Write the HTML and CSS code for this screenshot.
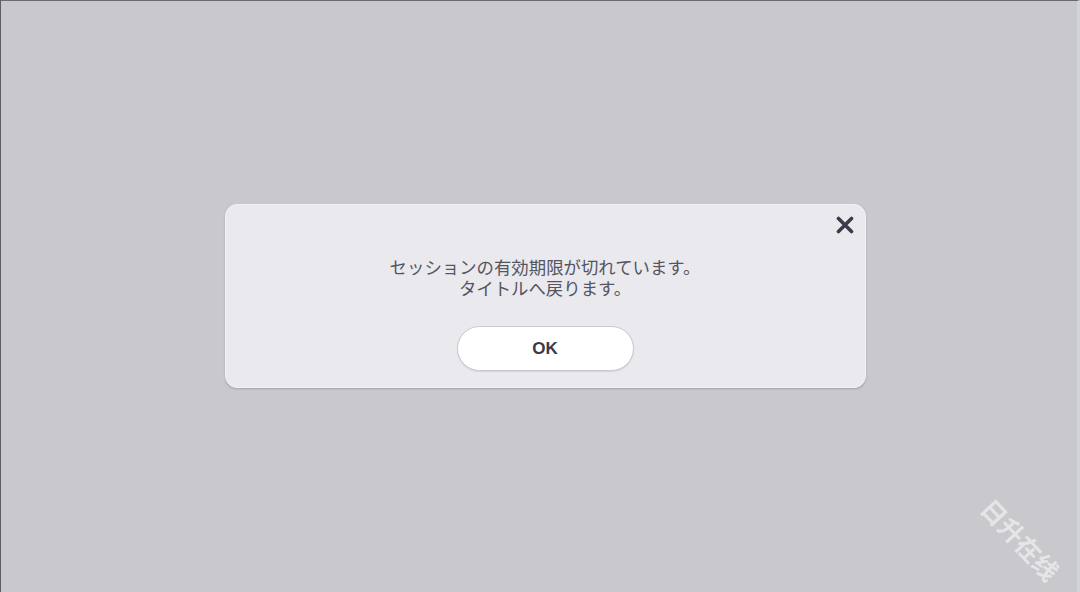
FILE: index.html
```html
<!DOCTYPE html>
<html lang="ja">
<head>
<meta charset="utf-8">
<link rel="stylesheet" href="styles.css">
</head>
<body>
<div class="screen">
  <div class="dialog">
    <button class="close" aria-label="close">
      <svg width="18" height="18" viewBox="0 0 18 18"><path d="M2.5 2.5 L15.5 15.5 M15.5 2.5 L2.5 15.5" stroke="#3b3b49" stroke-width="3.6" stroke-linecap="round"/></svg>
    </button>
    <p class="message">セッションの有効期限が切れています。<br>タイトルへ戻ります。</p>
    <button class="ok">OK</button>
  </div>
  <div class="watermark">日升在线</div>
</div>
</body>
</html>
```
FILE: styles.css
```css
html, body {
  margin: 0;
  padding: 0;
}
body {
  width: 1080px;
  height: 592px;
  overflow: hidden;
  background: #c8c8cd;
  font-family: "Noto Sans CJK JP", "Noto Sans", sans-serif;
}
.screen {
  position: relative;
  box-sizing: border-box;
  width: 1080px;
  height: 592px;
  border-left: 1px solid #5d5d66;
  border-top: 1px solid #6a6a72;
  border-right: 3px solid #d2d2d9;
  display: flex;
  align-items: center;
  justify-content: center;
  padding-left: 12px;
}
.dialog {
  position: relative;
  box-sizing: border-box;
  width: 641px;
  height: 184px;
  margin-top: -1px;
  background: #e9e9ee;
  border-radius: 12px;
  border: 1px solid #f2f2f6;
  box-shadow: 0 1px 2px rgba(90, 90, 110, 0.35);
  display: flex;
  flex-direction: column;
  align-items: center;
  padding-top: 51px;
}
.message {
  margin: 0;
  font-size: 17.4px;
  line-height: 21px;
  color: #55555f;
  text-align: center;
}
.ok {
  margin-top: 28px;
  width: 177px;
  height: 45px;
  border-radius: 23px;
  background: #ffffff;
  border: 1px solid #c9c9d2;
  box-shadow: 0 1px 1px rgba(120, 120, 140, 0.2);
  font-family: "Liberation Sans", Arial, sans-serif;
  font-weight: 700;
  font-size: 17px;
  color: #3a3a48;
  padding: 0;
}
.close {
  position: absolute;
  top: 11px;
  right: 11px;
  width: 18px;
  height: 18px;
  padding: 0;
  border: none;
  background: none;
  display: flex;
}
.watermark {
  position: absolute;
  left: 970px;
  top: 525px;
  transform: rotate(47deg);
  font-size: 25px;
  line-height: 26px;
  font-weight: 700;
  color: rgba(255, 255, 255, 0.55);
  white-space: nowrap;
  font-family: "Noto Sans CJK SC", sans-serif;
}
```
